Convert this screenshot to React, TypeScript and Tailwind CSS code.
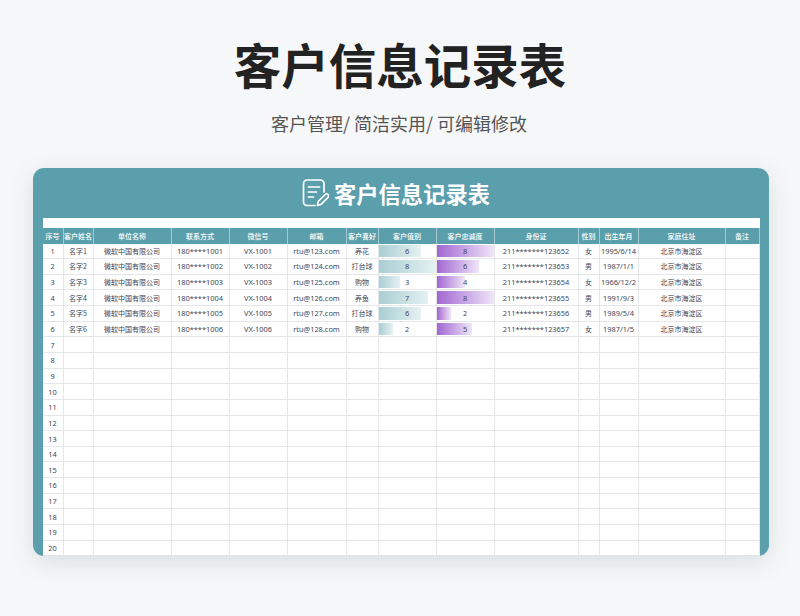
const cols = ["序号", "客户姓名", "单位名称", "联系方式", "微信号", "邮箱", "客户喜好", "客户值别", "客户忠诚度", "身份证", "性别", "出生年月", "家庭住址", "备注"];

const data = [
  { name: "名字1", hobby: "养花", level: 6, loyal: 8, gender: "女", birth: "1995/6/14" },
  { name: "名字2", hobby: "打台球", level: 8, loyal: 6, gender: "男", birth: "1987/1/1" },
  { name: "名字3", hobby: "购物", level: 3, loyal: 4, gender: "女", birth: "1966/12/2" },
  { name: "名字4", hobby: "养鱼", level: 7, loyal: 8, gender: "男", birth: "1991/9/3" },
  { name: "名字5", hobby: "打台球", level: 6, loyal: 2, gender: "男", birth: "1989/5/4" },
  { name: "名字6", hobby: "购物", level: 2, loyal: 5, gender: "女", birth: "1987/1/5" },
];

const gridCols = "grid grid-cols-[21px_30px_78px_58px_58px_59px_32px_58px_58px_84px_21px_39px_87px_34px]";
const cell = "flex items-center justify-center border-r border-[#e4e6ea] whitespace-nowrap overflow-hidden leading-[14px]";
const latin = "font-['Noto_Sans','Noto_Sans_CJK_SC',sans-serif] text-[7.4px]";

function Bar({ value, kind }: { value: number; kind: "teal" | "purple" }) {
  const cls = kind === "teal"
    ? "bg-gradient-to-r from-[#a8ced3] to-[#e6f1f2]"
    : "bg-gradient-to-r from-[#a266d0] to-[#f0e6f7]";
  return (
    <div className={`${cell} ${latin} relative`}>
      <div className="absolute left-0 top-px bottom-px">
        <div className={`h-full ${cls}`} style={{ width: `${(value / 8) * 57}px` }} />
      </div>
      <span className="relative">{value}</span>
    </div>
  );
}

export default function App() {
  return (
    <div className="w-[800px] h-[616px] bg-[#f6f7f8] flex flex-col items-center overflow-hidden font-['Noto_Sans_CJK_SC','Noto_Sans',sans-serif]">
      <h1 className="mt-[30px] h-[68px] leading-[68px] text-[47.5px] font-bold text-[#222222]">客户信息记录表</h1>
      <p className="mt-[10px] mb-[1px] pr-[2px] h-[30px] leading-[30px] text-[18px] text-[#555555]">客户管理/ 简洁实用/ 可编辑修改</p>
      <div className="mt-[29px] ml-[2px] w-[736px] h-[388px] rounded-[11px] bg-[#5c9fac] shadow-[0_6px_24px_rgba(70,100,110,0.16)] flex flex-col items-center overflow-hidden">
        <div className="h-[50px] w-full flex items-center justify-center gap-[5px] pr-[10px] shrink-0">
          <svg width="27" height="28" viewBox="0 0 27 28" fill="none" stroke="#ffffff" strokeWidth="1.7" strokeLinecap="round" strokeLinejoin="round">
            <path d="M13 26.5H5a3.5 3.5 0 0 1-3.5-3.5V4.5A3.5 3.5 0 0 1 5 1h13.5A3.5 3.5 0 0 1 22 4.5V13" />
            <path d="M6.5 8h11M6.5 13h8M6.5 18h5" />
            <path d="M15.5 26.5l.7-4 7-7a1.9 1.9 0 0 1 2.8 2.8l-7 7z" />
          </svg>
          <span className="text-[22.3px] font-bold text-white leading-none">客户信息记录表</span>
        </div>
        <div className="w-[717px] h-[10px] bg-white shrink-0" />
        <div className="w-[717px] text-[7px] text-[#444655]">
          <div className={`${gridCols} h-[15.5px] bg-[#5c9fac] text-white font-medium`}>
            {cols.map((c) => (
              <div key={c} className="flex items-center justify-center border-r border-[#a5cad1] whitespace-nowrap overflow-hidden">{c}</div>
            ))}
          </div>
          {Array.from({ length: 20 }, (_, i) => {
            const d = data[i];
            return (
              <div key={i} className={`${gridCols} h-[15.65px] bg-white border-b border-[#e4e6ea]`}>
                <div className={`${cell} ${latin}`}>{i + 1}</div>
                <div className={cell}>{d?.name}</div>
                <div className={cell}>{d && "微软中国有限公司"}</div>
                <div className={`${cell} ${latin}`}>{d && `180****100${i + 1}`}</div>
                <div className={`${cell} ${latin}`}>{d && `VX-100${i + 1}`}</div>
                <div className={`${cell} ${latin}`}>{d && `rtu@${123 + i}.com`}</div>
                <div className={cell}>{d?.hobby}</div>
                {d ? <Bar value={d.level} kind="teal" /> : <div className={cell} />}
                {d ? <Bar value={d.loyal} kind="purple" /> : <div className={cell} />}
                <div className={`${cell} ${latin}`}>{d && `211*******12365${i + 2}`}</div>
                <div className={cell}>{d?.gender}</div>
                <div className={`${cell} ${latin} text-[6.8px]`}>{d?.birth}</div>
                <div className={cell}>{d && "北京市海淀区"}</div>
                <div className={cell} />
              </div>
            );
          })}
        </div>
      </div>
    </div>
  );
}
